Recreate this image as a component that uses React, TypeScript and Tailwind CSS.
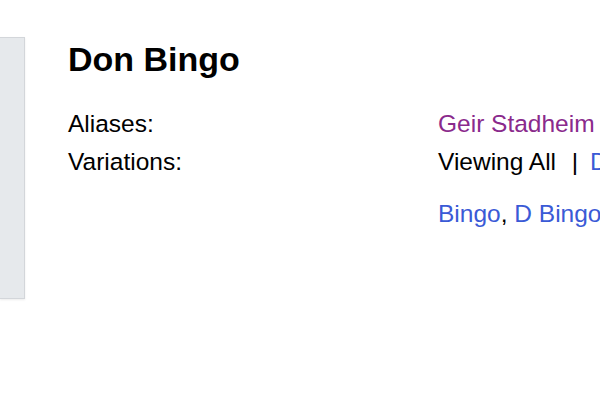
import React from "react";

function ProfileHeader() {
  const name = "Don Bingo";
  const alias = "Geir Stadheim";
  const variations = ["Bingo", "D Bingo", "Don B", "Don Bingo Feat."];
  return (
    <div className="flex-1 pl-[43px] pt-[38px]">
      <h1 className="text-[34px] leading-[42px] font-bold text-black whitespace-nowrap">{name}</h1>
      <div className="mt-[25px] flex text-[24.5px] text-black whitespace-nowrap">
        <div className="w-[370px] shrink-0 flex flex-col">
          <div className="leading-[38px]">Aliases:</div>
          <div className="leading-[38px]">Variations:</div>
        </div>
        <div className="flex flex-col">
          <div className="leading-[38px]">
            <a className="text-[#8a2a8c]">{alias}</a>
          </div>
          <div className="leading-[38px]">
            Viewing All <span className="ml-[9px] mr-[5px]">|</span>{" "}
            <a className="text-[#3a5ad6]">DB</a>
          </div>
          <div className="mt-[14px] leading-[38px]">
            {variations.map((v, i) => (
              <span key={v}>
                <a className="text-[#3a5ad6]">{v}</a>
                {i < variations.length - 1 ? ", " : ""}
              </span>
            ))}
          </div>
        </div>
      </div>
    </div>
  );
}

export default function App() {
  return (
    <div
      className="w-[600px] h-[400px] overflow-hidden bg-white flex"
      style={{ fontFamily: '"Liberation Sans", Arial, sans-serif' }}
    >
      <div className="mt-[37px] h-[262px] w-[25px] shrink-0 bg-[#e6e9ec] border border-l-0 border-[#d3d6da] shadow-[0_1px_2px_rgba(0,0,0,0.08)]" />
      <ProfileHeader />
    </div>
  );
}
